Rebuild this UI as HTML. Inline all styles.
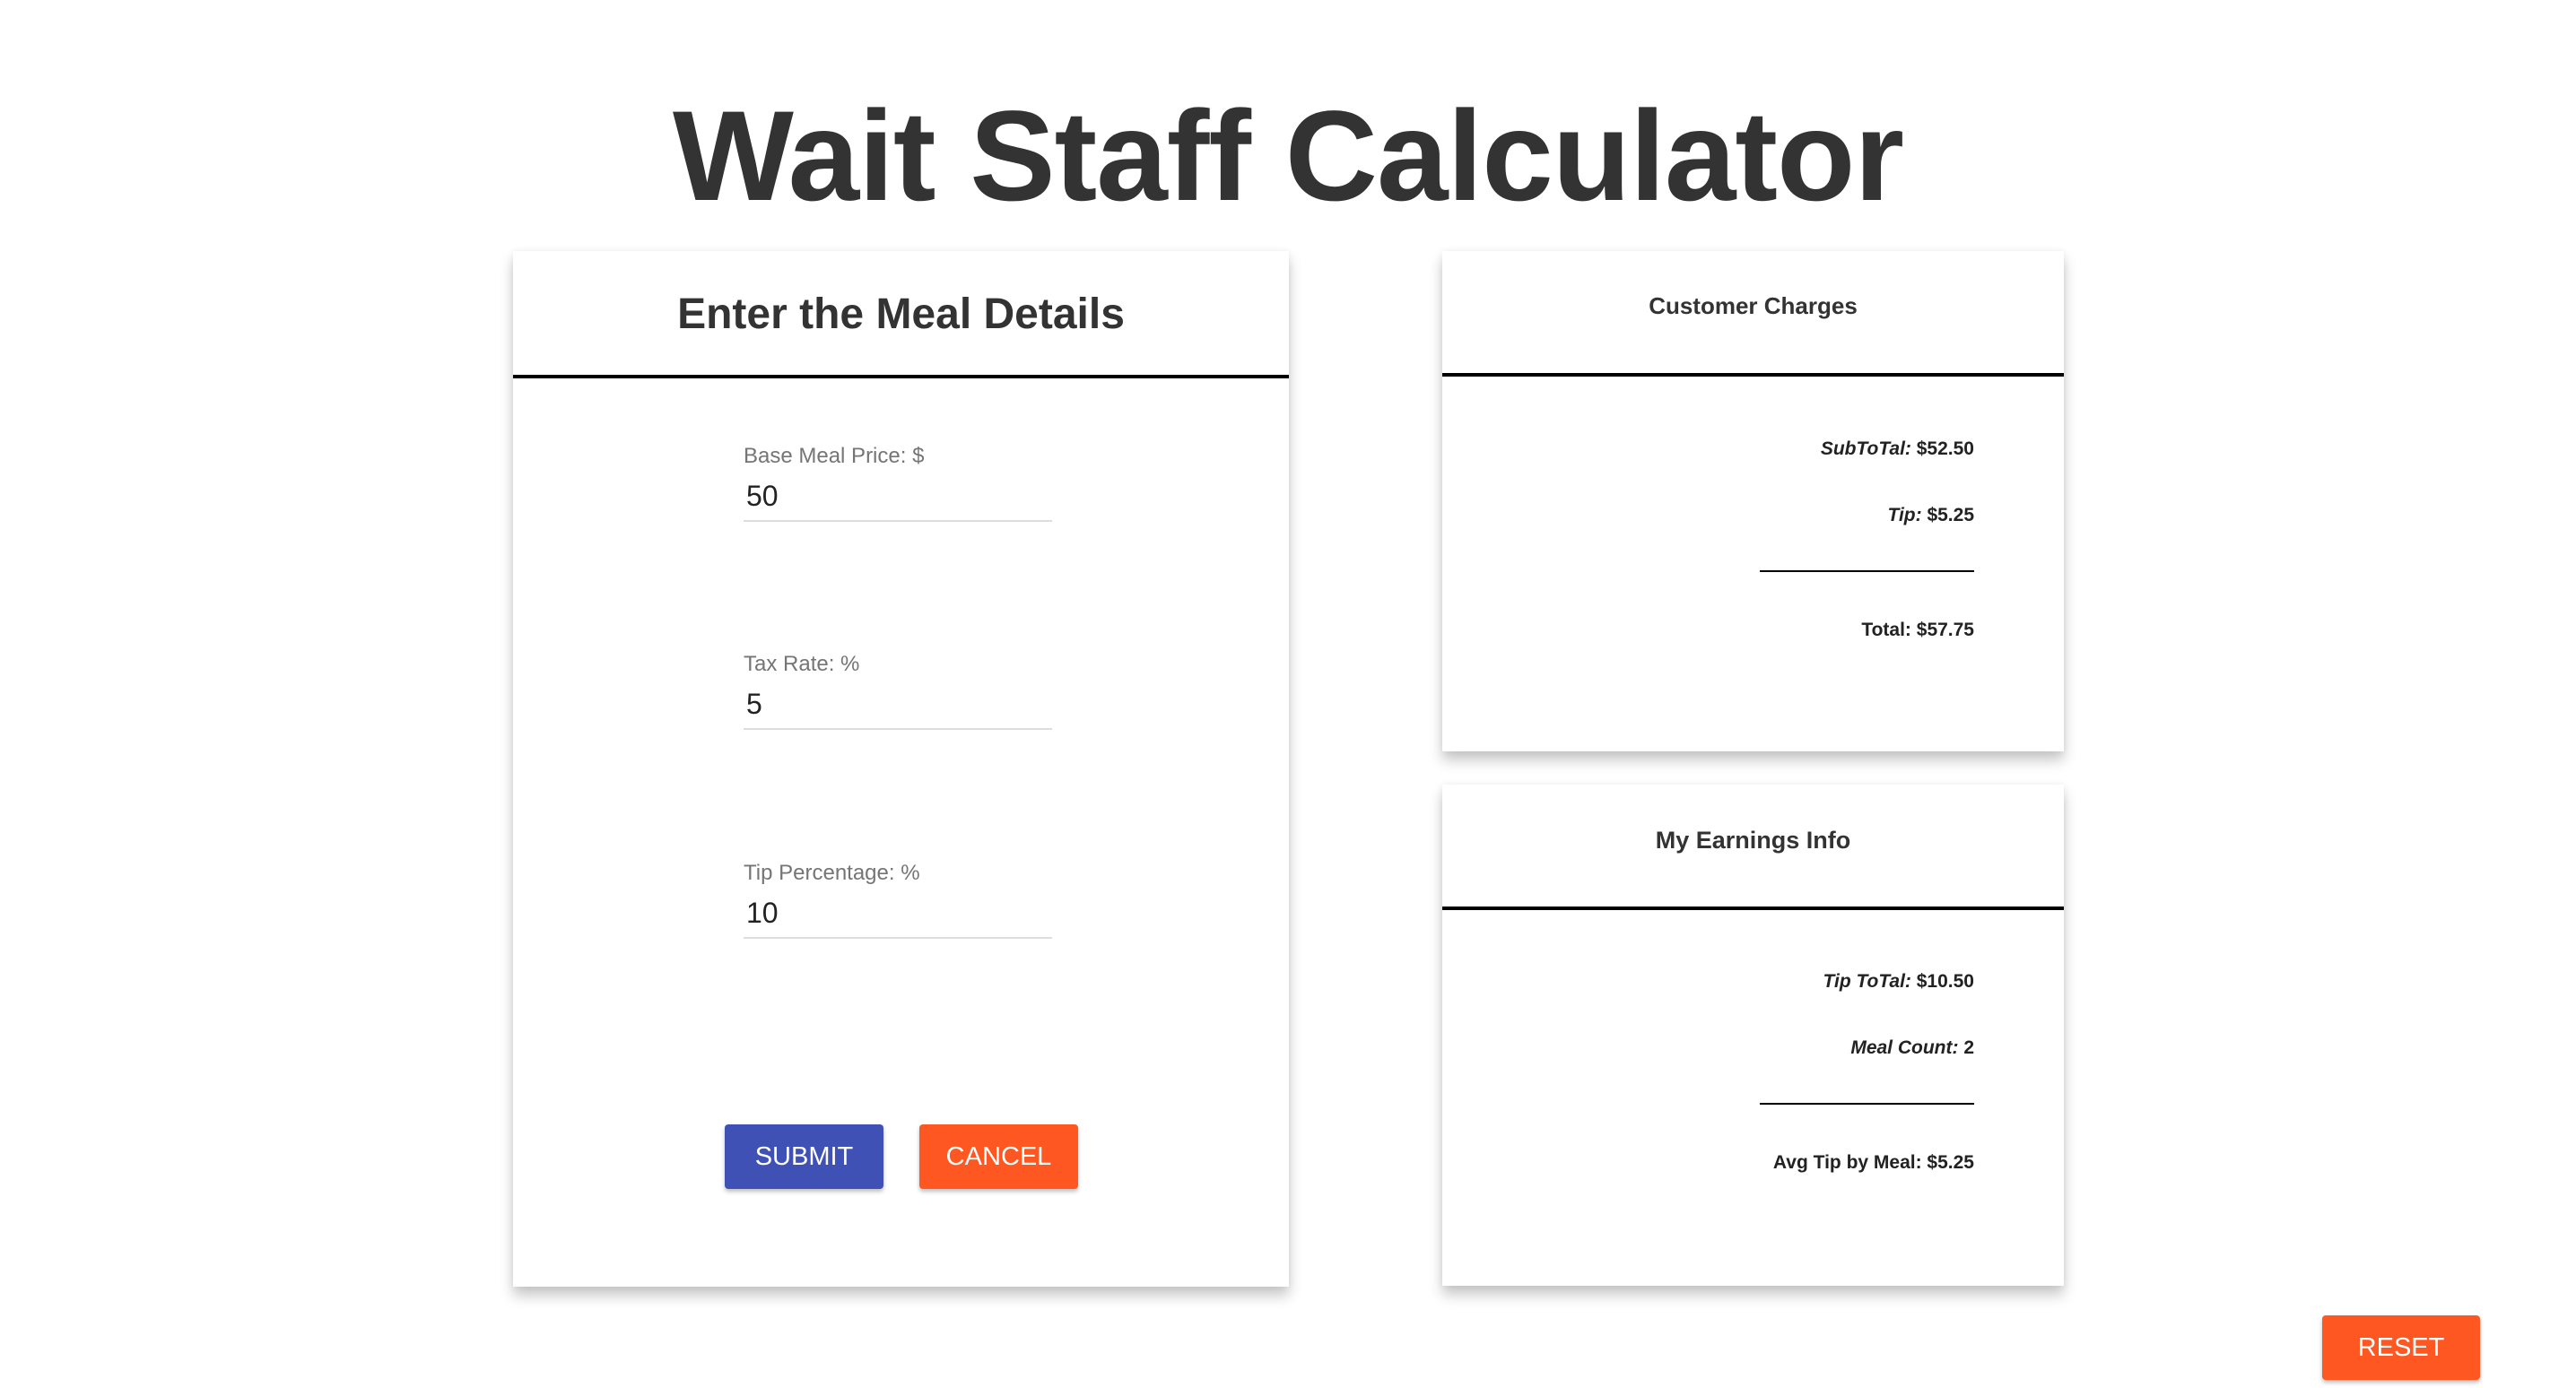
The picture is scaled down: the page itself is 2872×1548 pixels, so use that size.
<!DOCTYPE html>
<html><head><meta charset="utf-8"><style>
*{margin:0;padding:0;box-sizing:border-box}
body{width:2872px;height:1548px;background:#fff;font-family:"Liberation Sans",Arial,sans-serif;position:relative;overflow:hidden;color:#333}
h1{position:absolute;left:0;width:2872px;text-align:center;top:95px;font-size:143px;line-height:160px;font-weight:bold;color:#333;letter-spacing:-1px}
.card{position:absolute;background:#fff;box-shadow:0 10px 14px rgba(0,0,0,.22),0 0 8px rgba(0,0,0,.06)}
.hline{position:absolute;left:0;right:0;height:4px;background:#000}
.ct{position:absolute;left:0;right:0;text-align:center;font-weight:bold;color:#333}
.lab{position:absolute;left:829px;font-size:24px;color:#757575}
.val{position:absolute;left:832px;font-size:32px;color:#222}
.ul{position:absolute;left:829px;width:344px;height:2px;background:#ddd}
.btn{position:absolute;color:#fff;font-size:29px;text-align:center;border-radius:4px;box-shadow:0 3px 5px rgba(0,0,0,.25)}
.r{position:absolute;right:0;width:600px;text-align:right;font-size:21px;font-weight:bold;color:#222}
.r i{font-style:italic}
.rule{position:absolute;left:1962px;width:239px;height:2px;background:#000}
</style></head><body>
<h1>Wait Staff Calculator</h1>

<div class="card" style="left:572px;top:280px;width:865px;height:1155px">
  <div class="ct" style="font-size:48px;top:41px;line-height:60px">Enter the Meal Details</div>
  <div class="hline" style="top:138px"></div>
</div>
<div class="lab" style="top:495px">Base Meal Price: $</div>
<div class="val" style="top:535px">50</div>
<div class="ul" style="top:580px"></div>
<div class="lab" style="top:727px">Tax Rate: %</div>
<div class="val" style="top:767px">5</div>
<div class="ul" style="top:812px"></div>
<div class="lab" style="top:960px">Tip Percentage: %</div>
<div class="val" style="top:1000px">10</div>
<div class="ul" style="top:1045px"></div>
<div class="btn" style="left:808px;top:1254px;width:177px;height:72px;line-height:72px;background:#3f51b5">SUBMIT</div>
<div class="btn" style="left:1025px;top:1254px;width:177px;height:72px;line-height:72px;background:#ff5722">CANCEL</div>

<div class="card" style="left:1608px;top:280px;width:693px;height:558px">
  <div class="ct" style="top:45px;font-size:26px;line-height:32px">Customer Charges</div>
  <div class="hline" style="top:136px"></div>
</div>
<div class="card" style="left:1608px;top:875px;width:693px;height:559px">
  <div class="ct" style="top:46px;font-size:27px;line-height:32px">My Earnings Info</div>
  <div class="hline" style="top:136px"></div>
</div>
<div style="position:absolute;left:1601px;top:0;width:600px;height:1548px">
  <div class="r" style="top:489px"><i>SubToTal:</i> $52.50</div>
  <div class="r" style="top:563px"><i>Tip:</i> $5.25</div>
  <div class="r" style="top:691px">Total: $57.75</div>
  <div class="r" style="top:1083px"><i>Tip ToTal:</i> $10.50</div>
  <div class="r" style="top:1157px"><i>Meal Count:</i> 2</div>
  <div class="r" style="top:1285px">Avg Tip by Meal: $5.25</div>
</div>
<div class="rule" style="top:636px"></div>
<div class="rule" style="top:1230px"></div>

<div class="btn" style="left:2589px;top:1467px;width:176px;height:72px;line-height:72px;background:#ff5722">RESET</div>
</body></html>
